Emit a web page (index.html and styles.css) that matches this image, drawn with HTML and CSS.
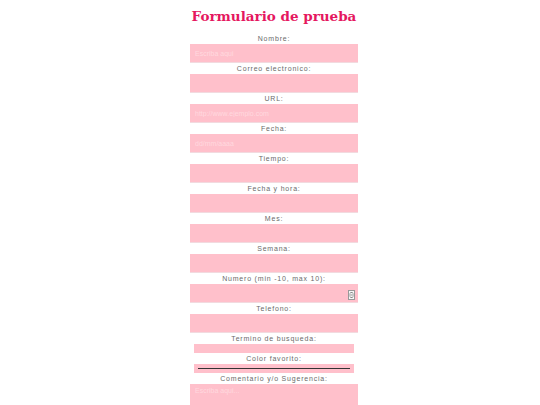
FILE: index.html
```
<!DOCTYPE html>
<html lang="es">
<head>
<meta charset="utf-8">
<title>Formulario de prueba</title>
<link rel="stylesheet" href="styles.css">
</head>
<body>
<h1 class="title">Formulario de prueba</h1>
<form class="form">
  <label class="lbl">Nombre:</label>
  <input class="fld" type="text" placeholder="Escriba aqui">
  <label class="lbl">Correo electronico:</label>
  <input class="fld" type="text">
  <label class="lbl">URL:</label>
  <input class="fld" type="text" placeholder="http://www.ejemplo.com">
  <label class="lbl">Fecha:</label>
  <input class="fld" type="text" placeholder="dd/mm/aaaa">
  <label class="lbl">Tiempo:</label>
  <input class="fld" type="text">
  <label class="lbl">Fecha y hora:</label>
  <input class="fld" type="text">
  <label class="lbl">Mes:</label>
  <input class="fld" type="text">
  <label class="lbl">Semana:</label>
  <input class="fld" type="text">
  <label class="lbl">Numero (min -10, max 10):</label>
  <div class="numwrap">
    <input class="fld" type="text">
    <span class="spin"><svg width="7" height="10" viewBox="0 0 7 10"><rect x="0.5" y="0.5" width="6" height="9" fill="#f6f6f6" stroke="#999"/><line x1="0.5" y1="5" x2="6.5" y2="5" stroke="#999"/><path d="M2 3.5 L3.5 2 L5 3.5" fill="none" stroke="#666"/><path d="M2 6.5 L3.5 8 L5 6.5" fill="none" stroke="#666"/></svg></span>
  </div>
  <label class="lbl">Telefono:</label>
  <input class="fld" type="text">
  <label class="lbl">Termino de busqueda:</label>
  <input class="fld small" type="text">
  <label class="lbl">Color favorito:</label>
  <div class="color"><span class="swatch"></span></div>
  <label class="lbl">Comentario y/o Sugerencia:</label>
  <textarea class="area" placeholder="Escriba aqui..."></textarea>
</form>
</body>
</html>
```
FILE: styles.css
```
html, body {
  margin: 0;
  background: #ffffff;
}
body {
  padding-left: 8px;
  overflow: hidden;
  height: 405px;
}
.title {
  margin: 6px 0 0 0;
  height: 27px;
  line-height: 20px;
  text-align: center;
  font-family: "DejaVu Serif", serif;
  font-weight: bold;
  font-size: 13.5px;
  color: #e5175f;
}
.form {
  width: 168px;
  margin: 0 auto;
  display: flex;
  flex-direction: column;
}
.lbl {
  display: block;
  height: 11px;
  line-height: 11px;
  text-align: center;
  font-family: "Liberation Sans", Arial, sans-serif;
  font-size: 7px;
  letter-spacing: 0.8px;
  color: #6a6a6a;
}
.fld {
  display: block;
  box-sizing: border-box;
  width: 168px;
  height: 19px;
  margin: 0;
  padding: 0 5px;
  border: none;
  border-bottom: 1px solid #f2dadf;
  background: #ffc0cb;
  font-family: "Liberation Sans", Arial, sans-serif;
  font-size: 7px;
  color: #333;
}
.fld::placeholder,
.area::placeholder {
  color: #ffd9df;
}
.numwrap {
  position: relative;
}
.spin {
  position: absolute;
  right: 3px;
  top: 6px;
  line-height: 0;
}
.small {
  width: 160px;
  height: 9px;
  margin-left: 4px;
  border-bottom: none;
}
.color {
  box-sizing: border-box;
  width: 160px;
  height: 9px;
  margin-left: 4px;
  background: #ffc0cb;
  display: flex;
  align-items: center;
  padding: 0 4px;
}
.swatch {
  display: block;
  flex: 1;
  height: 1px;
  background: #333;
}
.area {
  display: block;
  box-sizing: border-box;
  width: 168px;
  height: 40px;
  margin: 0;
  padding: 3px 5px;
  border: none;
  background: #ffc0cb;
  font-family: "Liberation Sans", Arial, sans-serif;
  font-size: 7px;
  resize: none;
}
```
